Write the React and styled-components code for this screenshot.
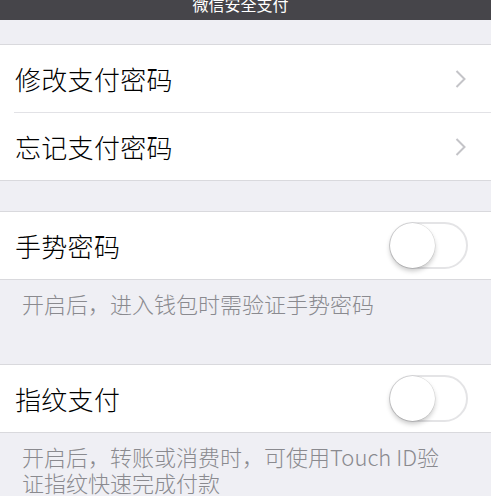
import React from "react";
import styled, { createGlobalStyle } from "styled-components";

const Global = createGlobalStyle`
  html, body { margin: 0; padding: 0; background: #ffffff; }
  body { font-family: "Noto Sans CJK SC", "Noto Sans", sans-serif; }
  * { box-sizing: border-box; }
`;

const Page = styled.div`
  width: 491px;
  height: 496px;
  background: #efeff4;
  display: flex;
  flex-direction: column;
  overflow: hidden;
`;

const NavBar = styled.div`
  height: 20px;
  flex-shrink: 0;
  background: #46454a;
  display: flex;
  align-items: flex-end;
  justify-content: center;
  padding-right: 10px;
  overflow: hidden;
`;

const Title = styled.span`
  color: #ffffff;
  font-size: 16px;
  line-height: 16px;
  margin-bottom: 8px;
  white-space: nowrap;
`;

const Section = styled.div`
  margin-top: ${(p) => p.$gap}px;
  flex-shrink: 0;
  background: #ffffff;
  border-top: 1px solid #d9d9dd;
  border-bottom: 1px solid #d9d9dd;
  display: flex;
  flex-direction: column;
`;

const Row = styled.div`
  height: ${(p) => (p.$last ? 67 : 68)}px;
  margin-left: 14px;
  padding-right: 24px;
  display: flex;
  align-items: center;
  justify-content: space-between;
  border-bottom: ${(p) => (p.$last ? "none" : "1px solid #e2e2e6")};
`;

const Label = styled.span`
  font-size: 26px;
  font-weight: 300;
  color: #000000;
  padding-left: 1px;
  letter-spacing: 0.3px;
`;

const Chevron = styled.svg`
  width: 13px;
  height: 20px;
`;

const Switch = styled.div`
  width: 79px;
  height: 47px;
  margin-right: -1px;
  border-radius: 24px;
  border: 2px solid #e4e4e6;
  background: #ffffff;
  position: relative;
`;

const Knob = styled.div`
  position: absolute;
  left: -1px;
  top: -1px;
  width: 45px;
  height: 45px;
  border-radius: 50%;
  background: #ffffff;
  box-shadow: 0 0 0 0.5px rgba(0, 0, 0, 0.12), 0 3px 5px rgba(0, 0, 0, 0.22);
`;

const Footer = styled.div`
  flex-shrink: 0;
  padding: ${(p) => p.$top}px 44px 0 22px;
  font-size: 22px;
  font-weight: 300;
  line-height: 26px;
  color: #8a8a8f;
`;

const ChevronIcon = () => (
  <Chevron viewBox="0 0 13 20">
    <path d="M2.5 2 L10.5 10 L2.5 18" fill="none" stroke="#c4c4c8" strokeWidth="2" />
  </Chevron>
);

const Toggle = () => (
  <Switch>
    <Knob />
  </Switch>
);

export default function App() {
  return (
    <>
      <Global />
      <Page>
        <NavBar>
          <Title>微信安全支付</Title>
        </NavBar>
        <Section $gap={24}>
          <Row>
            <Label>修改支付密码</Label>
            <ChevronIcon />
          </Row>
          <Row $last>
            <Label>忘记支付密码</Label>
            <ChevronIcon />
          </Row>
        </Section>
        <Section $gap={30}>
          <Row $last>
            <Label>手势密码</Label>
            <Toggle />
          </Row>
        </Section>
        <Footer $top={10}>开启后，进入钱包时需验证手势密码</Footer>
        <Section $gap={48}>
          <Row $last>
            <Label>指纹支付</Label>
            <Toggle />
          </Row>
        </Section>
        <Footer $top={10}>开启后，转账或消费时，可使用Touch ID验证指纹快速完成付款</Footer>
      </Page>
    </>
  );
}
